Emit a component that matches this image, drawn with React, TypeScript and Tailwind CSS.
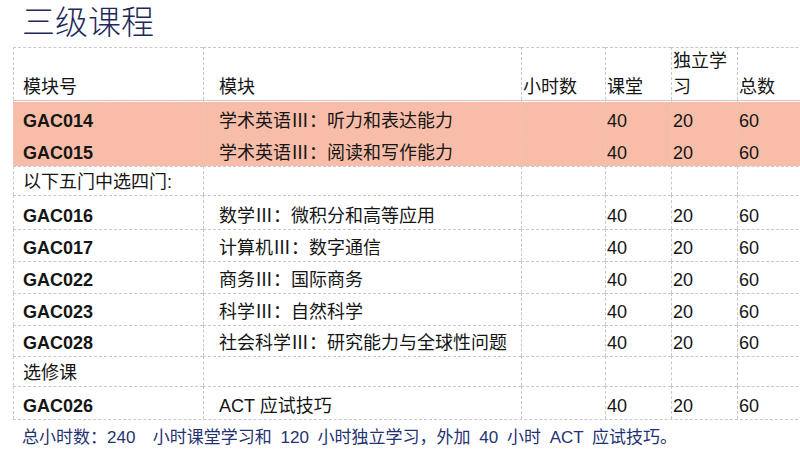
import type { FC } from 'react';

type Row = {
  code: string;
  name: string;
  pink?: boolean;
  note?: boolean;
  h: string;
};

const rows: Row[] = [
  { code: 'GAC014', name: '学术英语|听力和表达能力', pink: true, h: 'h-[34px]' },
  { code: 'GAC015', name: '学术英语|阅读和写作能力', pink: true, h: 'h-[32px]' },
  { code: '以下五门中选四门:', name: '', note: true, h: 'h-[29px]' },
  { code: 'GAC016', name: '数学|微积分和高等应用', h: 'h-[34px]' },
  { code: 'GAC017', name: '计算机|数字通信', h: 'h-[32px]' },
  { code: 'GAC022', name: '商务|国际商务', h: 'h-[32px]' },
  { code: 'GAC023', name: '科学|自然科学', h: 'h-[32px]' },
  { code: 'GAC028', name: '社会科学|研究能力与全球性问题', h: 'h-[31px]' },
  { code: '选修课', name: '', note: true, h: 'h-[30px]' },
  { code: 'GAC026', name: 'ACT 应试技巧', h: 'h-[33px]' }
];

const cell = 'border-l border-t border-dashed border-[#c9c9c9] align-bottom p-0 leading-[26px]';

// "Ⅲ：" is set in the CJK face so it takes full-width cells like the original
const ModuleName: FC<{ text: string }> = ({ text }) => {
  if (!text.includes('|')) return <>{text}</>;
  const [a, b] = text.split('|');
  return (
    <>
      {a}
      <span className="font-['Noto_Sans_CJK_SC',sans-serif]">Ⅲ：</span>
      {b}
    </>
  );
};

const App: FC = () => {
  return (
    <div className="h-[458px] w-[800px] overflow-hidden bg-white font-['Liberation_Sans','Noto_Sans_CJK_SC',sans-serif] text-[#151515]">
      <h1 className="h-[47px] pl-[22px] text-[33px] leading-[46px] font-extralight text-[#1f2a5c]">
        三级课程
      </h1>
      <table className="ml-[13px] w-[800px] table-fixed border-separate border-spacing-0 border-b border-dashed border-[#c9c9c9] text-[18px]">
        <colgroup>
          <col className="w-[190px]" />
          <col className="w-[318px]" />
          <col className="w-[84px]" />
          <col className="w-[66px]" />
          <col className="w-[66px]" />
          <col />
        </colgroup>
        <thead>
          <tr className="h-[50px]">
            <td className={`${cell} pl-[9px]`}>模块号</td>
            <td className={`${cell} pl-[15px]`}>模块</td>
            <td className={`${cell} pl-[1px]`}>小时数</td>
            <td className={`${cell} pl-[1px]`}>课堂</td>
            <td className={`${cell} pl-[1px]`}>独立学习</td>
            <td className={`${cell} pl-[1px]`}>总数</td>
          </tr>
        </thead>
        <tbody>
          {rows.map((r, i) => {
            const first = i === 0;
            const extra = r.pink
              ? `bg-[#f8bda9] border-l-[#f3c4b4] ${first ? 'border-t-[#c9c9c9] shadow-[inset_0_1px_0_white]' : 'border-t-[#f8bda9]'}`
              : '';
            return (
              <tr key={r.code} className={r.h}>
                <td className={`${cell} ${extra} pl-[9px] ${r.note ? '' : 'font-bold'}`}>
                  {r.code}
                </td>
                <td className={`${cell} ${extra} pl-[15px]`}>
                  <ModuleName text={r.name} />
                </td>
                <td className={`${cell} ${extra}`} />
                <td className={`${cell} ${extra} pl-[1px]`}>{r.note ? '' : '40'}</td>
                <td className={`${cell} ${extra} pl-[1px]`}>{r.note ? '' : '20'}</td>
                <td className={`${cell} ${extra} pl-[1px]`}>{r.note ? '' : '60'}</td>
              </tr>
            );
          })}
        </tbody>
      </table>
      <p className="mt-[5px] pl-[22px] text-[17px] leading-[26px] text-[#1f3272] [word-spacing:4px]">
        总小时数：240&nbsp; 小时课堂学习和 120 小时独立学习，外加 40 小时 ACT 应试技巧。
      </p>
    </div>
  );
};

export default App;
